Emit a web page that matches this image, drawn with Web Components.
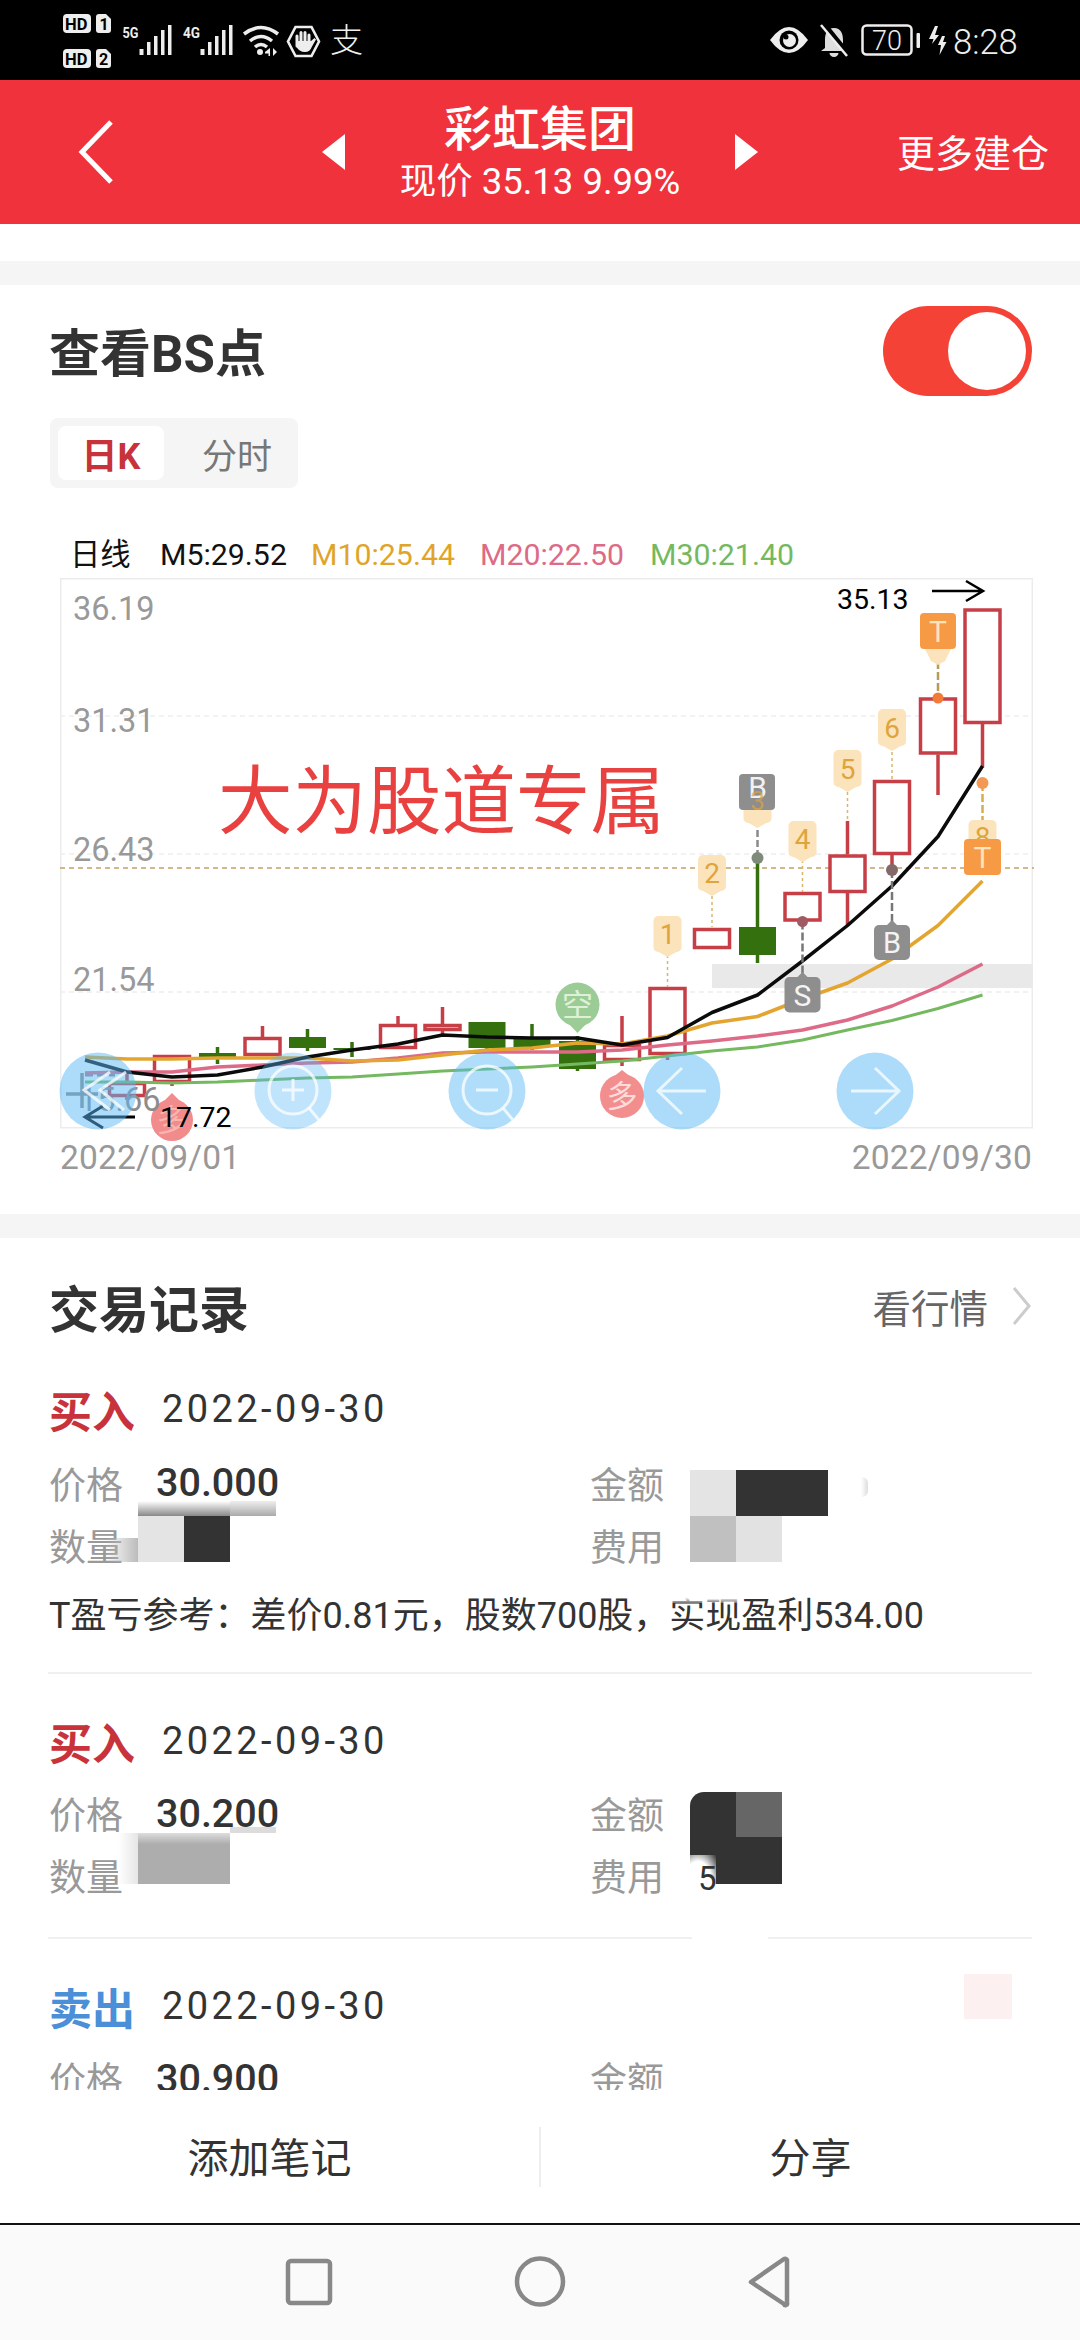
<!DOCTYPE html>
<html lang="zh"><head><meta charset="utf-8">
<style>
html,body{margin:0;padding:0;background:#fff}
body{width:1080px;height:2340px;overflow:hidden;display:flex;flex-direction:column;font-family:Roboto,"Noto Sans CJK SC",sans-serif;color:#333}
</style></head><body>
<status-bar></status-bar>
<app-header></app-header>
<bs-card></bs-card>
<trade-panel>
  <trade-row kind="买入" tone="buy" price="30.000" note="T盈亏参考：差价0.81元，股数700股，实现盈利534.00" mosaic="a"></trade-row>
  <trade-row kind="买入" tone="buy" price="30.200" mosaic="b"></trade-row>
  <trade-row kind="卖出" tone="sell" price="30.900" mosaic="c"></trade-row>
</trade-panel>
<action-bar></action-bar>
<system-nav></system-nav>
<script>
const FONT='Roboto,"Noto Sans CJK SC",sans-serif';
class Base extends HTMLElement{
  constructor(){super();this.attachShadow({mode:'open'});}
}
customElements.define('status-bar',class extends Base{connectedCallback(){this.shadowRoot.innerHTML=`
<style>:host{display:block;height:80px;flex:none;background:#000}svg{display:block}</style>
<svg width="1080" height="80" viewBox="0 0 1080 80" fill="#eee">
 <g font-family="Roboto,sans-serif" font-weight="700">
  <rect x="63" y="14" width="28" height="19" rx="4"/><text x="65" y="29.5" font-size="16.5" fill="#000">HD</text>
  <path d="M96 17a3 3 0 0 1 3-3h7l5 5v11a3 3 0 0 1-3 3h-9a3 3 0 0 1-3-3z"/><text x="99.5" y="29.5" font-size="16" fill="#000">1</text>
  <rect x="63" y="49" width="28" height="19" rx="4"/><text x="65" y="64.5" font-size="16.5" fill="#000">HD</text>
  <path d="M96 52a3 3 0 0 1 3-3h7l5 5v11a3 3 0 0 1-3 3h-9a3 3 0 0 1-3-3z"/><text x="99" y="64.5" font-size="16" fill="#000">2</text>
 </g>
 <g font-family="Roboto,sans-serif" font-size="14" font-weight="700"><text x="122.5" y="38" textLength="16" lengthAdjust="spacingAndGlyphs">5G</text><text x="183" y="38" textLength="17" lengthAdjust="spacingAndGlyphs">4G</text></g>
 <path d="M139.5 49h4v6h-4zM147 42h3.5v13H147zM154 36h3.5v19H154zM161 30h3.5v25H161zM168 25h3.5v30H168zM200.5 49h4v6h-4zM208 42h3.5v13H208zM215 36h3.5v19H215zM222 30h3.5v25H222zM229 25h3.5v30H229z"/>
 <g fill="none" stroke="#eee" stroke-width="3.5"><path d="M244 34q17-13 34 0"/><path d="M250 41q11-9 22 0"/><path d="M255 47q6-5 12 0"/></g>
 <circle cx="260" cy="52" r="3"/><path d="M270 48v8h-1.5v-2.5H265v-1.5zM273 48l4 4-4 4z"/>
 <path d="M295.5 27h16l7.5 14.5-7.5 14.5h-16L288 41.500z" fill="none" stroke="#eee" stroke-width="2.6"/>
 <path d="M297 46v-10M301 45V32.500M305 45V32.500M309 45V35" stroke="#eee" stroke-width="3" stroke-linecap="round" fill="none"/>
 <path d="M296 41h15l3.500-3 1.500 1.500-4 7q-2 5.500-7 5.500-6 0-9-6z"/>
 <text x="330" y="52" font-size="33" font-family="Noto Sans CJK SC,sans-serif" font-weight="300">支</text>
 <path d="M770 40q19-26 38 0-19 26-38 0z"/><circle cx="789" cy="40" r="9.500" fill="#000"/><circle cx="789.500" cy="40.500" r="6.500"/><circle cx="786" cy="37" r="2.500" fill="#000"/>
 <path d="M834 28c-7 0-9 6-9 12v8l-4 3h26l-4-3v-8c0-6-2-12-9-12z" fill="#ddd"/><path d="M829.500 53a4.500 4 0 0 0 9 0z" fill="#ddd"/><path d="M824 24l25 31" stroke="#000" stroke-width="5"/><path d="M821 25l26 31" stroke="#eee" stroke-width="2.500"/>
 <rect x="862.500" y="25.500" width="49" height="29" rx="4" fill="none" stroke="#eee" stroke-width="2.500"/><rect x="916.500" y="33" width="3.500" height="15" rx="1"/>
 <text x="887" y="50" font-size="27" text-anchor="middle" font-family="Roboto,sans-serif" font-weight="300">70</text>
 <path d="M935 26l-6 13h4.500l-1.500 5 7-9h-4l3-9zM942 36l-4 9h3l-1.500 10 7-13h-3.500l2-6z"/>
 <text x="953" y="53.500" font-size="34.500" font-family="Roboto,sans-serif" font-weight="300">8:28</text>
</svg>`}});
customElements.define('app-header',class extends Base{connectedCallback(){this.shadowRoot.innerHTML=`
<style>
:host{display:block;flex:none}
.bar{height:144px;background:#f0323c;color:#fff;display:grid;grid-template-columns:322px 1fr 322px;align-items:center;font-family:${FONT}}
.left{padding-left:78px;display:flex}
.mid{display:flex;align-items:center;justify-content:center;gap:0}
.tri{flex:none;width:23px}
.txt{width:390px;text-align:center;padding-top:6px}
.t{font-size:48px;line-height:50px;font-weight:500}
.s{font-size:36.500px;line-height:46px;margin-top:4px}
.more{font-size:38px;text-align:right;padding-right:31px;margin-top:-3px}
.gap{height:37px;background:#fff}.band{height:24px;background:#f5f5f5}
svg{display:block}
</style>
<div class="bar">
 <div class="left"><svg width="36" height="66" viewBox="0 0 36 66"><path d="M33 3L4 33l29 30" fill="none" stroke="#fff" stroke-width="5"/></svg></div>
 <div class="mid">
  <svg class="tri" height="36" viewBox="0 0 23 36"><path d="M23 0v36L0 18z" fill="#fff"/></svg>
  <div class="txt"><div class="t">彩虹集团</div><div class="s">现价 35.13 9.99%</div></div>
  <svg class="tri" height="36" viewBox="0 0 23 36"><path d="M0 0v36l23-18z" fill="#fff"/></svg>
 </div>
 <div class="more">更多建仓</div>
</div><div class="gap"></div><div class="band"></div>`}});
customElements.define('toggle-switch',class extends Base{connectedCallback(){this.shadowRoot.innerHTML=`
<style>:host{display:block;width:149px;height:90px;background:#f44336;border-radius:45px;flex:none;position:relative}
i{position:absolute;left:65px;top:6px;width:78px;height:78px;background:#fff;border-radius:50%}</style><i></i>`}});
customElements.define('segment-tabs',class extends Base{connectedCallback(){this.shadowRoot.innerHTML=`
<style>:host{display:inline-flex;background:#f5f5f5;border-radius:8px;padding:8px;width:232px;height:54px;font-family:${FONT}}
div{display:flex;align-items:center;justify-content:center}
.on{width:106px;background:#fff;border-radius:8px;color:#c8323a;font-weight:700;font-size:36px}
.off{flex:1;color:#777;font-size:35px;padding-left:20px}</style><div class="on">日K</div><div class="off">分时</div>`}});
/* chart data: centre x of each session, then body top/bottom, wick top/bottom, colour */
const C=[[82,1075,1094,1073,1108,'g0'],[127,1082,1097,1073,1100,'r'],[172,1055,1083,1055,1086,'r'],[217.5,1053,1057,1047,1064,'g'],[262.5,1037,1056,1026,1056,'r'],[307.5,1037,1048,1029,1051,'g'],[352,1048,1050,1042,1057,'g'],[398,1024,1049,1016,1049,'r'],[442.5,1024,1031,1007,1036,'r'],[487,1022,1048,1022,1051,'g'],[532,1039,1047,1024,1050,'g'],[577.5,1041,1069,1036,1071,'g'],[622,1044,1061,1016,1066,'r'],[667.5,987,1055,987,1060,'r'],[712,928,949,928,949,'r'],[757.5,927,955,860,963,'g'],[802.5,892,921.5,892,921.5,'r'],[847.5,854.5,893,821,925.5,'r'],[892,780,855,780,870,'r'],[938,697.5,754.5,697.5,795,'r'],[982.5,608.5,724,608.5,767.5,'r']];
const candles=C.map(([x,t,b,wt,wb,k],i)=>{
 if(k==='g0')return `<path d="M66 1094h32M${x} 1073v35" stroke="#8d8d8d" stroke-width="3.5"/><path d="M85 1075h30" stroke="#8d8d8d" stroke-width="3" stroke-dasharray="8 4"/>`;
 const col=k==='r'?'#c63f47':'#35700f';
 const wick=`<path d="M${x} ${wt}V${t}M${x} ${b}V${wb}" stroke="${col}" stroke-width="3.5"/>`;
 return wick+(k==='r'?`<rect x="${x-17.5}" y="${t+1.5}" width="35" height="${b-t-3}" fill="${i===1?'none':'#fff'}" stroke="${col}" stroke-width="3.5"/>`:`<rect x="${x-18.5}" y="${t}" width="37" height="${b-t}" fill="${col}"/>`);
}).join('');
const line=(pts,col,w)=>`<polyline fill="none" stroke="${col}" stroke-width="${w}" stroke-linejoin="round" points="${pts.map(p=>p.join(',')).join(' ')}"/>`;
const X=[85,127,172,217.5,262.5,307.5,352,398,442.5,487,532,577.5,622,667.5,712,757.5,802.5,847.5,892,938,982.5];
const zip=a=>a.map((y,i)=>[X[i],y]);
const M5=zip([1060,1072,1077,1075,1067,1057,1050,1044,1035,1037,1038,1038,1045,1037.5,1012.5,995,961,925.5,886,836.5,766]);
const M10=zip([1057,1059,1059,1058,1058,1058,1061,1060,1055,1050,1048,1043,1044,1036,1023,1016.5,999,983,959,925.5,881]);
const M20=zip([1073,1072,1072,1067,1065,1063,1062,1058,1053,1052,1052,1052,1050,1045,1041,1036,1030,1020,1006,987,964]);
const M30=zip([1082,1082,1083,1082,1080,1078,1077,1074,1071,1069,1067,1064,1061,1056,1051,1047,1040,1030,1020.5,1008.5,995]);
const tag=(cx,top,h,label,fill,col,dir,fs)=>{ /* rounded marker with a small point */
 const hw=dir==='yel'?14:18;
 const tip=dir==='yel'?`M${cx-hw} ${top+h-3}L${cx} ${top+h+5}L${cx+hw} ${top+h-3}z`:`M${cx-6} ${top+1}L${cx} ${top-5}L${cx+6} ${top+1}z`;
 return `<path d="${tip}" fill="${fill}"/><rect x="${cx-hw}" y="${top}" width="${hw*2}" height="${h}" rx="5" fill="${fill}"/><text x="${cx}" y="${top+h/2+fs*.36}" text-anchor="middle" font-size="${fs}" fill="${col}">${label}</text>`;
};
const Y='#fbe3bc',YT='#dfa43c',G='#8e8e8e',O='#f79a45';
const stem=(x,y1,y2,c,w=1.5,d='3 3')=>`<path d="M${x} ${y1}V${y2}" stroke="${c}" stroke-width="${w}" stroke-dasharray="${d}"/>`;
const markers=
 stem(667.5,955,987,'#d9b56a')+tag(667.5,916,36,'1',Y,YT,'yel',28)+
 stem(712,896,927,'#d9b56a')+tag(712,855,36,'2',Y,YT,'yel',28)+
 stem(802.5,860,892,'#d9b56a')+tag(802.5,821,36,'4',Y,YT,'yel',28)+
 stem(847.5,792,821,'#d9b56a')+tag(847.5,750,37,'5',Y,YT,'yel',28)+
 stem(892,752,780,'#d9b56a')+tag(892,709,37,'6',Y,YT,'yel',28)+
 stem(757.5,810,858,'#8a8a8a',2.5,'7 3')+tag(757.5,787,36,'',Y,YT,'yel',28)+
 `<rect x="739" y="774" width="36" height="36" rx="4" fill="${G}"/><text x="757.5" y="798" text-anchor="middle" font-size="30" fill="#f2f2f2">B</text><text x="757.5" y="810" text-anchor="middle" font-size="26" fill="${YT}" opacity=".7">3</text>`+
 `<circle cx="757.5" cy="858" r="6" fill="#7f8a7a"/>`+
 stem(802.5,921.5,977,'#777',2.5,'8 3')+`<circle cx="802.5" cy="921.5" r="5.5" fill="#a05a63"/>`+
 stem(892,870,925,'#777',2.5,'8 3')+`<circle cx="892" cy="870" r="6" fill="#85686a"/>`+
 stem(938,650,698,'#b89a55',2.5,'8 3')+`<path d="M925 649h26l-6 12-7 4-7-4z" fill="${Y}"/><rect x="920" y="613" width="36" height="36" rx="4" fill="${O}"/><text x="938" y="642" text-anchor="middle" font-size="30" fill="#fde4bd">T</text><circle cx="938" cy="698" r="5.5" fill="#f27b3a"/>`+
 stem(982.5,783,822,'#d6ac55',2.5,'8 3')+`<circle cx="982.5" cy="783" r="6" fill="#f29a55"/>`+
 tag(982.5,820,34,'8',Y,YT,'yel',28)+
 `<rect x="964" y="839" width="37" height="36" rx="4" fill="${O}"/><text x="982.5" y="868" text-anchor="middle" font-size="30" fill="#fde4bd">T</text>`+
 tag(892,925,35,'B',G,'#f4f4f4','gray',29)+
 tag(802.5,977,35.5,'S',G,'#f4f4f4','gray',30);
const circleTag=(cx,cy,r,label,fill,tipY,txt)=>`<path d="M${cx-10} ${cy+(tipY>cy?r-4:-r+4)}L${cx} ${tipY}L${cx+10} ${cy+(tipY>cy?r-4:-r+4)}z" fill="${fill}"/><circle cx="${cx}" cy="${cy}" r="${r}" fill="${fill}"/><text x="${cx}" y="${cy+11}" text-anchor="middle" font-size="31" fill="${txt}" font-family="Noto Sans CJK SC,sans-serif">${label}</text>`;
const btn=(cx,cy,o,inner)=>`<circle cx="${cx}" cy="${cy}" r="38.5" fill="#5ab9f5" fill-opacity="${o}"/><g fill="none" stroke="#fff" stroke-opacity=".75" stroke-width="3">${inner}</g>`;
const grid=[716,854,992].map(y=>`<path d="M60 ${y}H1032" stroke="#eee" stroke-width="1.5" stroke-dasharray="5 4"/>`).join('');
customElements.define('kline-chart',class extends Base{connectedCallback(){this.shadowRoot.innerHTML=`
<style>:host{display:block;width:1080px;height:550px;overflow:visible}
svg{display:block;overflow:visible;font-family:${FONT}}</style>
<svg width="1080" height="552" viewBox="0 578 1080 552">
 <rect x="60.75" y="578.75" width="971.5" height="549" fill="#fff" stroke="#ececec" stroke-width="1.5"/>
 ${grid}
 <path d="M60 868H1034" stroke="#c2a266" stroke-width="1.5" stroke-dasharray="5 4"/>
 <g font-size="32.5" fill="#999"><text x="73" y="620">36.19</text><text x="73" y="732">31.31</text><text x="73" y="861">26.43</text><text x="73" y="991">21.54</text></g>
 <rect x="712" y="964" width="321" height="24" fill="#e9e9e9"/>
 <text x="218" y="828" font-size="74.5" fill="#e8413f" font-family="Noto Sans CJK SC,sans-serif">大为股道专属</text>
 ${candles}
 ${line(M30,'#74b95f',3)}${line(M20,'#dd6a86',3.5)}${line(M10,'#e3a52f',3.5)}${line(M5,'#0b0b0b',3.5)}
 ${markers}
 ${circleTag(577.5,1004.5,22,'空','#9ccc95',1033,'#dff0d8')}
 ${circleTag(172,1120,21,'多','#f28b8b',1093,'#f7b5b0')}
 ${circleTag(622,1096,22,'多','#f28e8e',1070,'#fbdcdc')}
 <text x="79" y="1111" font-size="32.5" fill="#8c8c8c">15.66</text>
 <text x="160" y="1127" font-size="28.5" fill="#000">17.72</text>
 <text x="837" y="609" font-size="28.5" fill="#000">35.13</text>
 <path d="M932 591h50M966 581l17 10-17 10" fill="none" stroke="#000" stroke-width="2.5"/>
 <path d="M135 1117H86M103 1106l-18 11 18 11" fill="none" stroke="#000" stroke-width="3"/>
 ${btn(98,1091,.5,'<path d="M110 1072L84 1090l26 20M126 1072L100 1090l24 20"/>')}
 ${btn(293,1091,.38,'<circle cx="293" cy="1090" r="24"/><path d="M309 1108l10 12M293 1079v22M282 1090h22" />')}
 ${btn(487,1091,.48,'<circle cx="487" cy="1090" r="24"/><path d="M503 1108l10 12M476 1090h22"/>')}
 ${btn(682,1091,.5,'<path d="M658 1091h48M682 1068l-24 23 24 23"/>')}
 ${btn(875,1091,.5,'<path d="M851 1091h48M875 1068l24 23-24 23"/>')}
</svg>`}});
customElements.define('bs-card',class extends Base{connectedCallback(){this.shadowRoot.innerHTML=`
<style>
:host{display:block;flex:none;background:#fff;font-family:${FONT}}
.head{display:flex;justify-content:space-between;align-items:center;padding:21px 48px 0 49px;height:90px}
h2{margin:-3px 0 0;font-size:51px;font-weight:700;color:#333}
.tabs{padding:22px 0 0 50px;height:70px;display:block}
.legend{display:flex;margin:43px 0 0 70px;height:47px;font-size:30.3px;line-height:47px;white-space:nowrap}
.legend span{flex:none}
.dates{display:flex;justify-content:space-between;padding:10px 48px 0 60px;font-size:33.5px;line-height:40px;color:#999;letter-spacing:.2px}
.end{height:36px}
.band{height:24px;background:#f5f5f5}
</style>
<div class="head"><h2>查看BS点</h2><toggle-switch></toggle-switch></div>
<div class="tabs"><segment-tabs></segment-tabs></div>
<div class="legend"><span style="width:90px;color:#111">日线</span><span style="width:151px;color:#111">M5:29.52</span><span style="width:169px;color:#e0a528">M10:25.44</span><span style="width:170px;color:#dd6a86">M20:22.50</span><span style="color:#74b95f">M30:21.40</span></div>
<kline-chart></kline-chart>
<div class="dates"><span>2022/09/01</span><span>2022/09/30</span></div>
<div class="end"></div><div class="band"></div>`}});
customElements.define('trade-panel',class extends Base{connectedCallback(){this.shadowRoot.innerHTML=`
<style>
:host{display:block;flex:1;min-height:0;overflow:hidden;background:#fff;font-family:${FONT}}
.head{display:flex;align-items:center;justify-content:space-between;padding:0 48px 0 49px;height:96px;margin-top:20px}
h2{margin:0;font-size:50px;font-weight:700;color:#333}
.go{display:flex;align-items:center;gap:24px;font-size:38.5px;color:#666}
</style>
<div class="head"><h2>交易记录</h2><div class="go">看行情<svg width="20" height="40" viewBox="0 0 20 40"><path d="M2 2l15 18L2 38" fill="none" stroke="#ccc" stroke-width="3"/></svg></div></div>
<slot></slot>`}});
const MOS={
 a:`<i style="left:690px;top:5px;width:46px;height:46px;background:#e4e4e4"></i><i style="left:736px;top:5px;width:92px;height:46px;background:#333"></i>
    <i style="left:861px;top:12px;width:7px;height:20px;background:linear-gradient(90deg,#fff,#ddd);border-radius:0 6px 6px 0"></i>
    <i style="left:690px;top:51px;width:46px;height:46px;background:#c0c0c0"></i><i style="left:736px;top:51px;width:46px;height:46px;background:#e2e2e2"></i>
    <i style="left:105px;top:73px;width:33px;height:24px;background:linear-gradient(90deg,transparent,#bbb)"></i>
    <i style="left:138px;top:51px;width:46px;height:46px;background:#e4e4e4"></i><i style="left:184px;top:51px;width:46px;height:46px;background:#333"></i>
    <i style="left:138px;top:36px;width:92px;height:15px;background:linear-gradient(#fff,#888)"></i><i style="left:230px;top:36px;width:46px;height:15px;background:linear-gradient(#eee,#aaa)"></i>
    <i style="left:668px;top:124px;width:74px;height:14px;background:linear-gradient(#fff 60%,rgba(255,255,255,.3))"></i>`,
 b:`<i style="left:690px;top:5px;width:46px;height:92px;background:#333;border-top-left-radius:14px"></i><i style="left:736px;top:5px;width:46px;height:45px;background:#666"></i><i style="left:736px;top:50px;width:46px;height:47px;background:#333"></i>
    <i style="left:690px;top:68px;width:26px;height:36px;background:radial-gradient(ellipse at 30% 80%,#fff 55%,rgba(255,255,255,0) 100%)"></i>
    <b style="position:absolute;left:698px;top:75px;font-weight:400;font-size:33px;line-height:33px;color:#333">5</b>
    <i style="left:118px;top:46px;width:20px;height:51px;background:linear-gradient(90deg,#fff,#e6e6e6)"></i><i style="left:138px;top:46px;width:92px;height:51px;background:linear-gradient(#ddd,#adadad 22%)"></i><i style="left:230px;top:40px;width:46px;height:6px;background:#dcdcdc"></i>
    <i style="left:692px;top:147px;width:76px;height:5px;background:#fff"></i>`,
 c:``};
customElements.define('trade-row',class extends Base{connectedCallback(){
 const tone=this.getAttribute('tone'),note=this.getAttribute('note'),m=this.getAttribute('mosaic');
 this.shadowRoot.innerHTML=`
<style>
:host{display:block;margin:0 48px;padding:0 1px;border-bottom:2px solid #f0f0f0;font-family:${FONT}}
:host(:last-child){border-bottom:0}
:host(:first-child){margin-top:-12px}
.wrap{padding-top:41px;padding-bottom:25px}
.top{display:flex;align-items:center;height:52px;gap:27px;position:relative}
.k{font-size:43px;font-weight:700;color:${tone==='buy'?'#c8323a':'#4a8fd8'}}
.d{font-size:38px;letter-spacing:3.4px;color:#333}
.grid{position:relative;display:grid;grid-template-columns:541px 1fr;grid-auto-rows:62px;margin-top:${m==='a'?22.5:21}px;font-size:37px;color:#999}
.cell{display:flex;align-items:center;height:50px;gap:33px}
.v{color:#333;font-size:39.5px;font-weight:500}
.mos{position:absolute;left:-49px;top:${m==='a'?7:-1}px;width:1080px;height:100px;pointer-events:none}
.mos i{position:absolute;display:block}
.note{font-size:36px;line-height:46px;color:#333;margin:11.5px 0 8px}
.pink{position:absolute;left:915px;top:-6.5px;width:48px;height:45px;background:#fdf0f0}
</style>
<div class="wrap">
 <div class="top"><span class="k">${this.getAttribute('kind')}</span><span class="d">2022-09-30</span>${m==='c'?'<span class="pink"></span>':''}</div>
 <div class="grid">
  <div class="cell">价格 <span class="v">${this.getAttribute('price')}</span></div><div class="cell">金额</div>
  <div class="cell">数量</div><div class="cell">费用</div>
  <div class="mos">${MOS[m]}</div>
 </div>
 ${note?`<div class="note">${note}</div>`:''}
</div>`}});
customElements.define('action-bar',class extends Base{connectedCallback(){this.shadowRoot.innerHTML=`
<style>
:host{display:grid;grid-template-columns:1fr 2px 1fr;align-items:center;flex:none;height:133px;background:#fff;font-family:${FONT};font-size:41px;color:#333;text-align:center}
i{height:60px;background:#eee}
span{margin-top:-4px}
</style><span>添加笔记</span><i></i><span>分享</span>`}});
customElements.define('system-nav',class extends Base{connectedCallback(){this.shadowRoot.innerHTML=`
<style>:host{display:block;flex:none;height:117px;background:#fafafa;border-top:2px solid #111;box-sizing:border-box}
svg{display:block}</style>
<svg width="1080" height="115" viewBox="0 2225 1080 115" fill="none" stroke="#888" stroke-width="4.5">
<rect x="288" y="2261" width="42" height="42" rx="3"/><circle cx="540" cy="2281.5" r="23"/><path d="M787 2260v43a1.5 1.5 0 0 1-3 1l-33-22 33-23a2 2 0 0 1 3 1z" stroke-linejoin="round"/>
</svg>`}});
</script>
</body></html>
